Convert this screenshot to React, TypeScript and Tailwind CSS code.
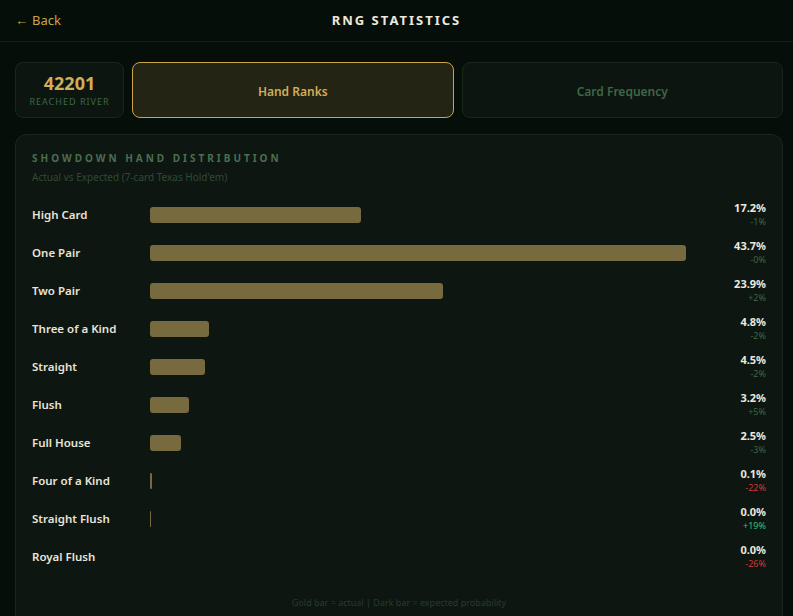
const ranks = [
  { name: 'High Card', pct: 17.2, diff: '-1%', tone: 'muted' },
  { name: 'One Pair', pct: 43.7, diff: '-0%', tone: 'muted' },
  { name: 'Two Pair', pct: 23.9, diff: '+2%', tone: 'muted' },
  { name: 'Three of a Kind', pct: 4.8, diff: '-2%', tone: 'muted' },
  { name: 'Straight', pct: 4.5, diff: '-2%', tone: 'muted' },
  { name: 'Flush', pct: 3.2, diff: '+5%', tone: 'muted' },
  { name: 'Full House', pct: 2.5, diff: '-3%', tone: 'muted' },
  { name: 'Four of a Kind', pct: 0.1, diff: '-22%', tone: 'bad' },
  { name: 'Straight Flush', pct: 0.0, diff: '+19%', tone: 'good' },
  { name: 'Royal Flush', pct: 0.0, diff: '-26%', tone: 'bad' },
];

const maxPct = 43.7;

function barWidth(name: string, pct: number) {
  if (name === 'Four of a Kind') return '2px';
  if (name === 'Straight Flush') return '1px';
  if (pct === 0) return '0px';
  return `${(pct / maxPct) * 100}%`;
}

function App() {
  return (
    <div
      className="min-h-screen bg-[#060e09] text-[#e8e4d8]"
      style={{ fontFamily: '"Noto Sans", "Open Sans", sans-serif' }}
    >
      {/* Header */}
      <header className="h-[42px] border-b border-[#142016] flex items-center relative px-[15px]">
        <button className="text-[13px] text-[#c9a449] flex items-center gap-1">
          <span>←</span>
          <span>Back</span>
        </button>
        <h1 className="absolute left-1/2 -translate-x-1/2 text-[13px] font-bold tracking-[2px] text-[#ece8dc]">
          RNG STATISTICS
        </h1>
      </header>

      <main className="pl-[15px] pr-[10px] pt-[20px]">
        {/* Tabs */}
        <div className="flex gap-2 h-[56px]">
          <div className="w-[109px] rounded-[8px] border border-[#1a2619] bg-[#0d1510] flex flex-col items-center justify-center">
            <div className="text-[18px] font-bold leading-5 text-[#d4ad5a]">42201</div>
            <div className="text-[9px] tracking-[1px] leading-3 mt-[3px] text-[#3f6646]">REACHED RIVER</div>
          </div>
          <button className="flex-1 rounded-[8px] border border-[#c9a449] bg-[#232414] pt-[3px] text-[12px] font-semibold text-[#d4ad5a]">
            Hand Ranks
          </button>
          <button className="flex-1 rounded-[8px] border border-[#1a2619] bg-[#0d1510] pt-[3px] text-[12px] font-semibold text-[#3f6646]">
            Card Frequency
          </button>
        </div>

        {/* Distribution panel */}
        <section className="mt-4 rounded-t-[12px] border border-b-0 border-[#1a2619] bg-[#0e1611] px-4 pt-[17px] pb-[7px]">
          <h2 className="text-[10px] font-bold tracking-[3px] leading-3 text-[#4a6e50]">
            SHOWDOWN HAND DISTRIBUTION
          </h2>
          <p className="text-[10px] mt-[7px] leading-3 text-[#2f4a35]">Actual vs Expected (7-card Texas Hold'em)</p>

          <div className="mt-[13px] flex flex-col">
            {ranks.map((r) => (
              <div key={r.name} className="h-[38px] flex items-center">
                <div className="w-[118px] text-[11.5px] font-semibold text-[#e8e4d8]">{r.name}</div>
                <div className="flex-1 h-4 relative">
                  <div
                    className="absolute left-0 top-0 h-4 rounded-[3px] bg-[#766a3e]"
                    style={{ width: barWidth(r.name, r.pct) }}
                  />
                </div>
                <div className="w-20 text-right">
                  <div className="text-[11px] font-bold leading-[14px] text-[#ece8dc]">{r.pct.toFixed(1)}%</div>
                  <div
                    className={
                      r.tone === 'bad'
                        ? 'text-[9px] leading-[14px] text-[#d0393d]'
                        : r.tone === 'good'
                        ? 'text-[9px] leading-[14px] text-[#2ec27e]'
                        : 'text-[9px] leading-[14px] text-[#3f6646]'
                    }
                  >
                    {r.diff}
                  </div>
                </div>
              </div>
            ))}
          </div>

          <p className="mt-[20px] text-center text-[9px] text-[#263d2b]">
            Gold bar = actual | Dark bar = expected probability
          </p>
        </section>
      </main>
    </div>
  );
}

export default App;
